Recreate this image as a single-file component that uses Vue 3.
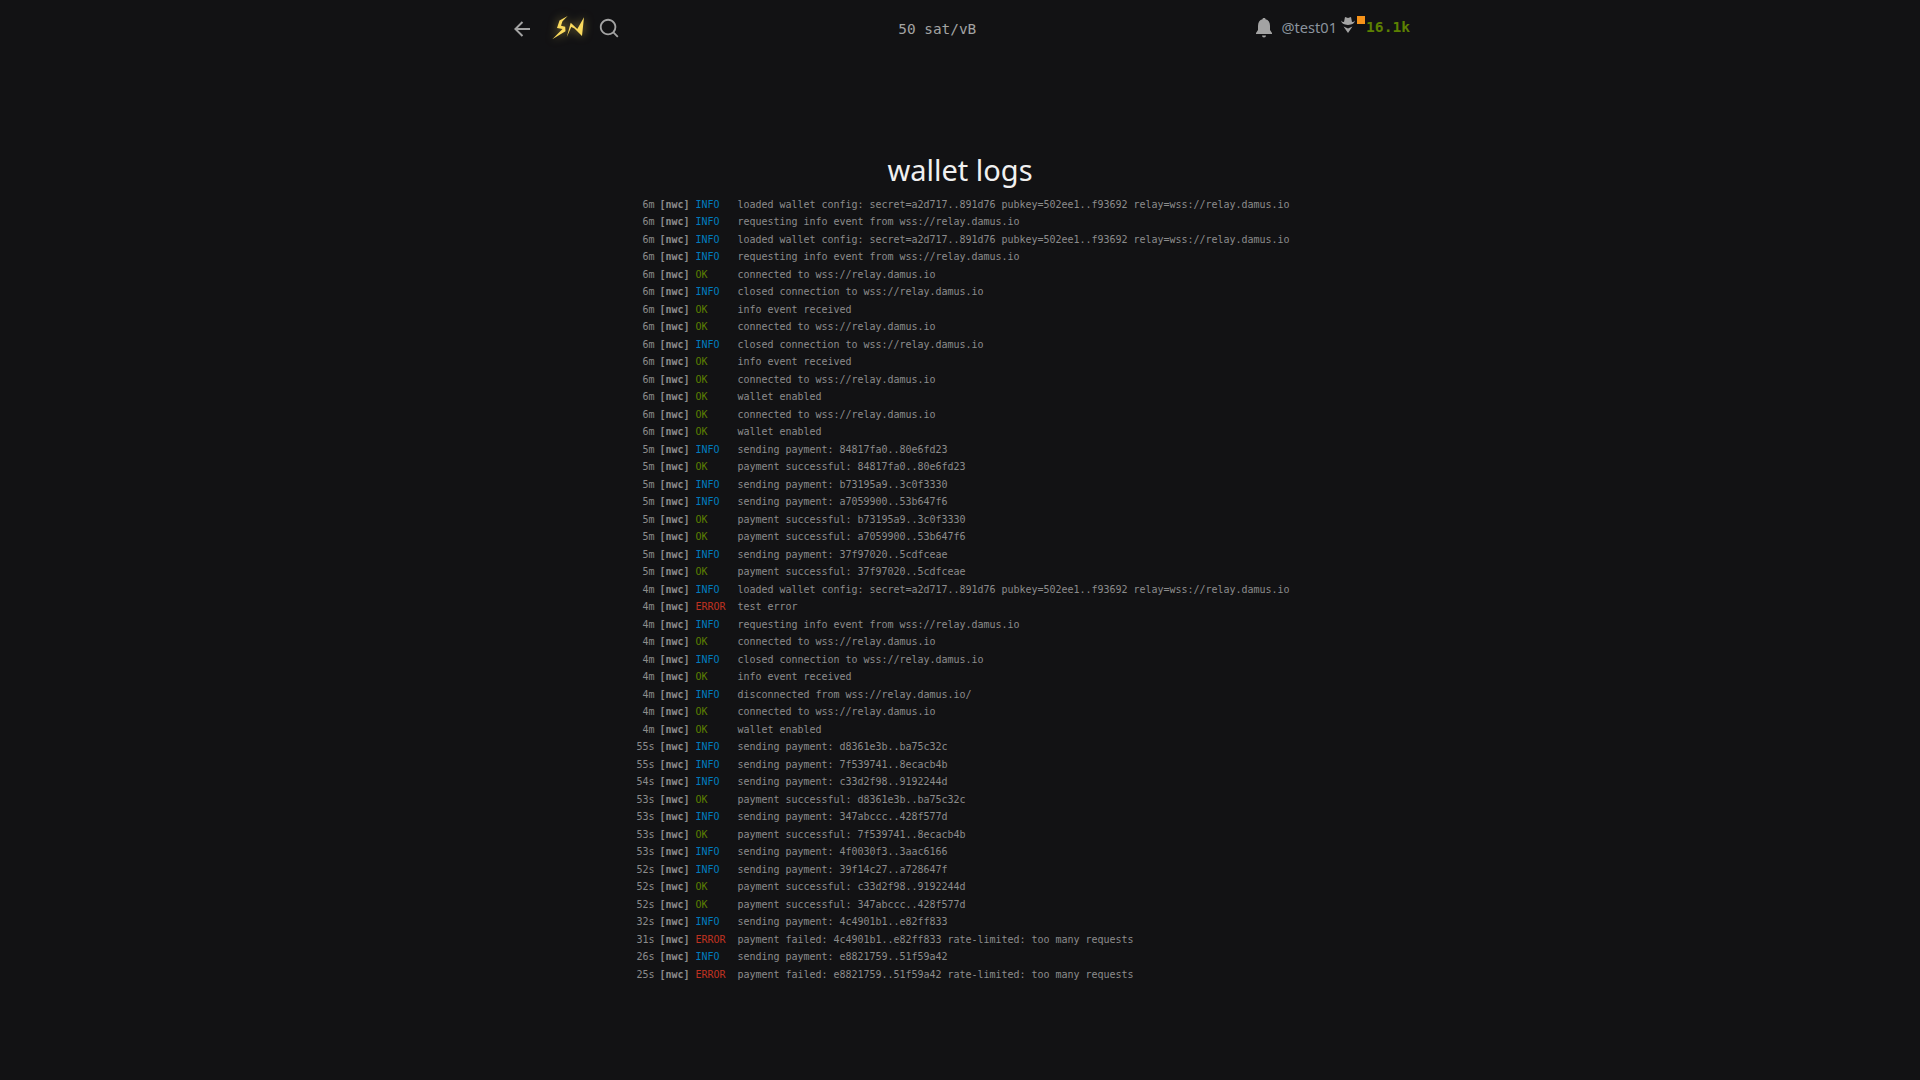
<script setup>
const cfg = 'loaded wallet config: secret=a2d717..891d76 pubkey=502ee1..f93692 relay=wss://relay.damus.io'
const req = 'requesting info event from wss://relay.damus.io'
const con = 'connected to wss://relay.damus.io'
const clo = 'closed connection to wss://relay.damus.io'
const inf = 'info event received'
const en = 'wallet enabled'
const raw = [
  ['6m','INFO',cfg],['6m','INFO',req],['6m','INFO',cfg],['6m','INFO',req],['6m','OK',con],['6m','INFO',clo],
  ['6m','OK',inf],['6m','OK',con],['6m','INFO',clo],['6m','OK',inf],['6m','OK',con],['6m','OK',en],['6m','OK',con],['6m','OK',en],
  ['5m','INFO','sending payment: 84817fa0..80e6fd23'],['5m','OK','payment successful: 84817fa0..80e6fd23'],
  ['5m','INFO','sending payment: b73195a9..3c0f3330'],['5m','INFO','sending payment: a7059900..53b647f6'],
  ['5m','OK','payment successful: b73195a9..3c0f3330'],['5m','OK','payment successful: a7059900..53b647f6'],
  ['5m','INFO','sending payment: 37f97020..5cdfceae'],['5m','OK','payment successful: 37f97020..5cdfceae'],
  ['4m','INFO',cfg],['4m','ERROR','test error'],['4m','INFO',req],['4m','OK',con],['4m','INFO',clo],['4m','OK',inf],
  ['4m','INFO','disconnected from wss://relay.damus.io/'],['4m','OK',con],['4m','OK',en],
  ['55s','INFO','sending payment: d8361e3b..ba75c32c'],['55s','INFO','sending payment: 7f539741..8ecacb4b'],
  ['54s','INFO','sending payment: c33d2f98..9192244d'],['53s','OK','payment successful: d8361e3b..ba75c32c'],
  ['53s','INFO','sending payment: 347abccc..428f577d'],['53s','OK','payment successful: 7f539741..8ecacb4b'],
  ['53s','INFO','sending payment: 4f0030f3..3aac6166'],['52s','INFO','sending payment: 39f14c27..a728647f'],
  ['52s','OK','payment successful: c33d2f98..9192244d'],['52s','OK','payment successful: 347abccc..428f577d'],
  ['32s','INFO','sending payment: 4c4901b1..e82ff833'],
  ['31s','ERROR','payment failed: 4c4901b1..e82ff833 rate-limited: too many requests'],
  ['26s','INFO','sending payment: e8821759..51f59a42'],
  ['25s','ERROR','payment failed: e8821759..51f59a42 rate-limited: too many requests'],
]
const rows = raw.map(([time, level, msg], id) => ({ id, time, level, msg, cls: level.toLowerCase() }))
</script>

<template>
  <div class="page">
    <header class="nav">
      <div class="nav-left">
        <svg class="back" width="24" height="24" viewBox="0 0 24 24" fill="#a3a3a3"><path d="M7.828 11H20v2H7.828l5.364 5.364-1.414 1.414L4 12l7.778-7.778 1.414 1.414z"/></svg>
        <svg class="logo" width="36" height="28" viewBox="0 0 36 28" fill="#fada5e"><path d="M17.700 2 9.500 6.500 7 14 12.500 15 2.300 25.300 15.500 17.200 15.200 12.700 11 11.700 12.500 7.200z"/><path d="M16.700 23.300 20.700 8.700 27.300 15 34 3.300 32 22 24.500 14.500 21.300 13z"/></svg>
        <svg class="search" width="22" height="22" viewBox="0 0 24 24" fill="#a3a3a3"><path d="M18.031 16.617l4.283 4.282-1.415 1.415-4.282-4.283A8.960 8.960 0 0 1 11 20c-4.968 0-9-4.032-9-9s4.032-9 9-9 9 4.032 9 9a8.960 8.960 0 0 1-1.969 5.617zm-2.006-.742A6.977 6.977 0 0 0 18 11c0-3.868-3.133-7-7-7-3.868 0-7 3.132-7 7 0 3.867 3.132 7 7 7a6.977 6.977 0 0 0 4.875-1.975l.15-.15z"/></svg>
      </div>
      <div class="nav-mid">50 sat/vB</div>
      <div class="nav-right">
        <svg class="bell" width="16" height="20" viewBox="0 0 16 20" fill="#a3a3a3"><path d="M8 0c1 0 1.500.5 1.500 1.300C12.500 2 14 4.500 14 8v4l2 3v1H0v-1l2-3V8c0-3.500 1.500-6 4.500-6.700C6.500.5 7 0 8 0zM6 17.500h4a2 2 0 0 1-4 0z"/></svg>
        <span class="user">@test01</span>
        <span class="badge">
          <svg width="14" height="16" viewBox="0 0 14 16" fill="#a3a3a3"><path d="M4 0 7 1 10 0 11 5Q13 5 14 3.500 13.500 7.500 7 8 .5 7.500 0 3.500 1 5 3 5zM2.500 9.500 7 11.500 11.500 9.500 7 16z"/></svg>
          <i class="dot"></i>
        </span>
        <span class="sats">16.1k</span>
      </div>
    </header>
    <main class="main">
      <h2 class="title">wallet logs</h2>
      <table class="logs">
        <tbody>
          <tr v-for="r in rows" :key="r.id">
            <td class="time">{{ r.time }}</td>
            <td class="src">[nwc]</td>
            <td class="level" :class="r.cls">{{ r.level }}</td>
            <td class="msg">{{ r.msg }}</td>
          </tr>
        </tbody>
      </table>
    </main>
  </div>
</template>

<style>
html, body { margin: 0; background: #121214; }
</style>

<style scoped>
.page {
  min-height: 1080px;
  background: #121214;
  color: #f0f0f0;
  font-family: "Noto Sans", sans-serif;
}
.nav {
  width: 900px;
  margin: 0 auto;
  height: 56px;
  display: flex;
  justify-content: space-between;
  align-items: center;
}
.nav-left { display: flex; align-items: center; }
.back { margin-top: 2px; }
.logo { margin-left: 16px; filter: drop-shadow(0 0 5px rgba(250, 218, 94, 0.55)); }
.search { margin-left: 12px; }
.nav-mid {
  font-family: "DejaVu Sans Mono", monospace;
  font-size: 14.4px;
  color: #a3a3a3;
  margin: 1px 2px 0 0;
}
.nav-right { display: flex; align-items: center; justify-content: flex-end; }
.user { font-size: 14.6px; color: #8b949e; margin-left: 9px; margin-top: -2px; }
.badge { position: relative; display: inline-flex; margin-left: 4px; margin-top: -6px; }
.dot {
  position: absolute;
  left: 16px;
  top: -1px;
  width: 8px;
  height: 8px;
  background: #f7931a;
}
.sats {
  font-family: "DejaVu Sans Mono", monospace;
  font-size: 14.6px;
  font-weight: 700;
  color: #5c8001;
  margin-left: 11px;
  margin-top: -3px;
}
.main { display: flex; flex-direction: column; align-items: center; padding-top: 94px; }
.title { margin: 0 0 5.5px; font-size: 29px; font-weight: 400; line-height: 40px; color: #f0f0f0; }
.logs {
  border-collapse: collapse;
  font-family: "DejaVu Sans Mono", monospace;
  font-size: 10px;
  letter-spacing: -0.02px;
  line-height: 17.5px;
  color: #8c8c8c;
  margin-right: 12px;
}
.logs td { padding: 0; white-space: pre; height: 17.5px; }
.time { text-align: right; padding-right: 5px !important; width: 36px; }
.src { font-weight: 700; color: #8c8c8c; padding-right: 6px !important; }
.level { padding-right: 12px !important; min-width: 30px; font-weight: 500; }
.info { color: #007cbe; }
.ok { color: #5c8001; }
.error { color: #c03221; }
.msg { color: #8c8c8c; }
</style>
